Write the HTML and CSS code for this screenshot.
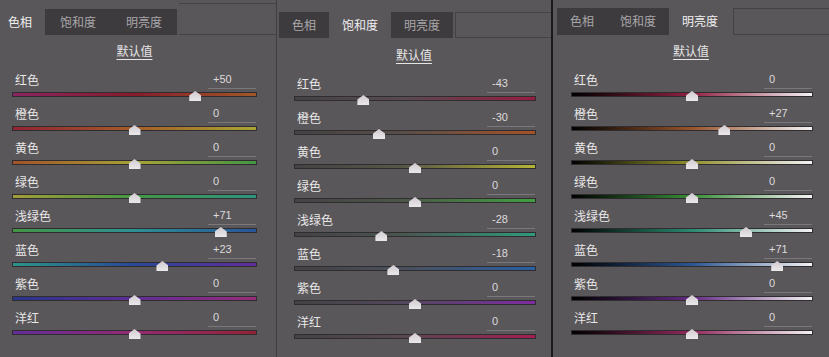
FILE: index.html
```html
<!DOCTYPE html>
<html lang="zh-CN">
<head>
    <meta charset="UTF-8">
    <meta name="viewport" content="width=device-width, initial-scale=1.0">
    <title>HSL 调整</title>
    <link rel="stylesheet" href="styles.css">
</head>
<body>
    <div class="board">
        <!-- 色相 -->
        <section class="panel panel-hue">
            <div class="tabs">
                <span class="tab active">色相</span>
                <span class="tab">饱和度</span>
                <span class="tab">明亮度</span>
                <span class="tab-fill"></span>
            </div>
            <div class="defaults"><span class="reset">默认值</span></div>
            <div class="rows">
                <div class="row">
                    <div class="row-head"><span class="name">红色</span><span class="val">+50</span></div>
                    <div class="track t-red"><span class="thumb" style="left: 75%"></span></div>
                </div>
                <div class="row">
                    <div class="row-head"><span class="name">橙色</span><span class="val">0</span></div>
                    <div class="track t-orange"><span class="thumb" style="left: 50%"></span></div>
                </div>
                <div class="row">
                    <div class="row-head"><span class="name">黄色</span><span class="val">0</span></div>
                    <div class="track t-yellow"><span class="thumb" style="left: 50%"></span></div>
                </div>
                <div class="row">
                    <div class="row-head"><span class="name">绿色</span><span class="val">0</span></div>
                    <div class="track t-green"><span class="thumb" style="left: 50%"></span></div>
                </div>
                <div class="row">
                    <div class="row-head"><span class="name">浅绿色</span><span class="val">+71</span></div>
                    <div class="track t-aqua"><span class="thumb" style="left: 85.5%"></span></div>
                </div>
                <div class="row">
                    <div class="row-head"><span class="name">蓝色</span><span class="val">+23</span></div>
                    <div class="track t-blue"><span class="thumb" style="left: 61.5%"></span></div>
                </div>
                <div class="row">
                    <div class="row-head"><span class="name">紫色</span><span class="val">0</span></div>
                    <div class="track t-purple"><span class="thumb" style="left: 50%"></span></div>
                </div>
                <div class="row">
                    <div class="row-head"><span class="name">洋红</span><span class="val">0</span></div>
                    <div class="track t-magenta"><span class="thumb" style="left: 50%"></span></div>
                </div>
            </div>
        </section>

        <!-- 饱和度 -->
        <section class="panel panel-sat">
            <div class="tabs">
                <span class="tab">色相</span>
                <span class="tab active">饱和度</span>
                <span class="tab">明亮度</span>
                <span class="tab-fill"></span>
            </div>
            <div class="defaults"><span class="reset">默认值</span></div>
            <div class="rows">
                <div class="row">
                    <div class="row-head"><span class="name">红色</span><span class="val">-43</span></div>
                    <div class="track t-red"><span class="thumb" style="left: 28.5%"></span></div>
                </div>
                <div class="row">
                    <div class="row-head"><span class="name">橙色</span><span class="val">-30</span></div>
                    <div class="track t-orange"><span class="thumb" style="left: 35%"></span></div>
                </div>
                <div class="row">
                    <div class="row-head"><span class="name">黄色</span><span class="val">0</span></div>
                    <div class="track t-yellow"><span class="thumb" style="left: 50%"></span></div>
                </div>
                <div class="row">
                    <div class="row-head"><span class="name">绿色</span><span class="val">0</span></div>
                    <div class="track t-green"><span class="thumb" style="left: 50%"></span></div>
                </div>
                <div class="row">
                    <div class="row-head"><span class="name">浅绿色</span><span class="val">-28</span></div>
                    <div class="track t-aqua"><span class="thumb" style="left: 36%"></span></div>
                </div>
                <div class="row">
                    <div class="row-head"><span class="name">蓝色</span><span class="val">-18</span></div>
                    <div class="track t-blue"><span class="thumb" style="left: 41%"></span></div>
                </div>
                <div class="row">
                    <div class="row-head"><span class="name">紫色</span><span class="val">0</span></div>
                    <div class="track t-purple"><span class="thumb" style="left: 50%"></span></div>
                </div>
                <div class="row">
                    <div class="row-head"><span class="name">洋红</span><span class="val">0</span></div>
                    <div class="track t-magenta"><span class="thumb" style="left: 50%"></span></div>
                </div>
            </div>
        </section>

        <!-- 明亮度 -->
        <section class="panel panel-lum">
            <div class="tabs">
                <span class="tab">色相</span>
                <span class="tab">饱和度</span>
                <span class="tab active">明亮度</span>
                <span class="tab-fill"></span>
            </div>
            <div class="defaults"><span class="reset">默认值</span></div>
            <div class="rows">
                <div class="row">
                    <div class="row-head"><span class="name">红色</span><span class="val">0</span></div>
                    <div class="track t-red"><span class="thumb" style="left: 50%"></span></div>
                </div>
                <div class="row">
                    <div class="row-head"><span class="name">橙色</span><span class="val">+27</span></div>
                    <div class="track t-orange"><span class="thumb" style="left: 63.5%"></span></div>
                </div>
                <div class="row">
                    <div class="row-head"><span class="name">黄色</span><span class="val">0</span></div>
                    <div class="track t-yellow"><span class="thumb" style="left: 50%"></span></div>
                </div>
                <div class="row">
                    <div class="row-head"><span class="name">绿色</span><span class="val">0</span></div>
                    <div class="track t-green"><span class="thumb" style="left: 50%"></span></div>
                </div>
                <div class="row">
                    <div class="row-head"><span class="name">浅绿色</span><span class="val">+45</span></div>
                    <div class="track t-aqua"><span class="thumb" style="left: 72.5%"></span></div>
                </div>
                <div class="row">
                    <div class="row-head"><span class="name">蓝色</span><span class="val">+71</span></div>
                    <div class="track t-blue"><span class="thumb" style="left: 85.5%"></span></div>
                </div>
                <div class="row">
                    <div class="row-head"><span class="name">紫色</span><span class="val">0</span></div>
                    <div class="track t-purple"><span class="thumb" style="left: 50%"></span></div>
                </div>
                <div class="row">
                    <div class="row-head"><span class="name">洋红</span><span class="val">0</span></div>
                    <div class="track t-magenta"><span class="thumb" style="left: 50%"></span></div>
                </div>
            </div>
        </section>
    </div>
</body>
</html>
```

FILE: styles.css
```css
body {
    margin: 0;
    padding: 0;
    background-color: #5a575a;
    font-family: "Noto Sans CJK SC", "Noto Sans", sans-serif;
    overflow: hidden;
}

.board {
    display: flex;
    width: 829px;
    height: 357px;
}

.panel {
    box-sizing: border-box;
    height: 357px;
    padding-top: 9px;
    background-color: #5a575a;
    overflow: hidden;
}

.panel-hue {
    width: 277px;
    border-right: 1px solid #403e41;
}

.panel-sat {
    width: 276px;
    padding-top: 12px;
    border-right: 2px solid #1b191b;
}

.panel-lum {
    width: 276px;
    padding-top: 8px;
}

/* tab strip */
.tabs {
    display: flex;
    height: 26px;
}

.panel-hue .tabs {
    margin-left: -5px;
}

.panel-sat .tabs {
    margin-left: 2px;
}

.panel-lum .tabs {
    height: 27px;
    margin-left: 4px;
}

.tab {
    padding: 0 13px;
    line-height: 26px;
    font-size: 12px;
    color: #a9a6a9;
    background-color: #3d3b3e;
    white-space: nowrap;
}

.panel-hue .tab {
    padding: 0 15px;
}

.panel-hue .tab.active {
    padding: 0 13px;
}

.tab.active {
    color: #f0eff0;
    background-color: #5a575a;
}

.tab-fill {
    flex: 1;
    box-sizing: border-box;
    border: 1px solid #444245;
    border-right: none;
    margin-left: 2px;
}

.panel-hue .tab-fill {
    margin-top: -6px;
    border-left: none;
}

/* default button */
.defaults {
    margin: 4px 0 9px;
    text-align: center;
    line-height: 20px;
}

.panel-hue .defaults {
    padding-right: 7px;
}

.panel-sat .defaults {
    margin-top: 5px;
}

.reset {
    font-size: 12px;
    color: #e6e5e6;
    text-decoration: underline;
    text-underline-offset: 3px;
}

/* slider rows */
.rows {
    padding: 0 17px 0 19px;
}

.panel-hue .rows {
    padding: 0 20px 0 13px;
}

.panel-sat .rows {
    padding: 0 16px 0 18px;
}

.row {
    height: 34px;
}

.row-head {
    display: flex;
    justify-content: space-between;
    height: 19px;
}

.name {
    padding: 1px 0 0 2px;
    font-size: 12px;
    line-height: 17px;
    color: #e8e7e8;
}

.val {
    box-sizing: border-box;
    width: 48px;
    padding-left: 5px;
    font-family: "Liberation Sans", Arial, sans-serif;
    font-size: 11px;
    line-height: 18px;
    color: #dcdadc;
    border-bottom: 1px solid #7b787b;
}

.track {
    position: relative;
    height: 3px;
    margin-top: 4px;
    box-shadow: 0 0 0 1px #2f2d30;
}

.thumb {
    position: absolute;
    top: -2px;
    width: 12px;
    height: 10px;
    transform: translateX(-50%);
    background: linear-gradient(#cfcacf, #ebe8eb);
    clip-path: polygon(50% 0, 100% 45%, 100% 100%, 0 100%, 0 45%);
}

/* hue gradients */
.panel-hue .t-red { background: linear-gradient(90deg, #8a2460, #861c2a 50%, #a05828); }
.panel-hue .t-orange { background: linear-gradient(90deg, #902434, #a65c28 50%, #aaa636); }
.panel-hue .t-yellow { background: linear-gradient(90deg, #a25228, #a6a236 50%, #449644); }
.panel-hue .t-green { background: linear-gradient(90deg, #a29e38, #449644 50%, #2e9480); }
.panel-hue .t-aqua { background: linear-gradient(90deg, #429442, #2c9094 50%, #2a5498); }
.panel-hue .t-blue { background: linear-gradient(90deg, #2c9488, #284896 50%, #602c98); }
.panel-hue .t-purple { background: linear-gradient(90deg, #28368a, #602c96 50%, #982c7a); }
.panel-hue .t-magenta { background: linear-gradient(90deg, #622c98, #942a72 50%, #942236); }

/* saturation gradients */
.panel-sat .t-red { background: linear-gradient(90deg, #444244, #584a50 45%, #981c40); }
.panel-sat .t-orange { background: linear-gradient(90deg, #444244, #584e48 45%, #a45228); }
.panel-sat .t-yellow { background: linear-gradient(90deg, #444244, #585646 45%, #b4b436); }
.panel-sat .t-green { background: linear-gradient(90deg, #444244, #4c5648 45%, #40a040); }
.panel-sat .t-aqua { background: linear-gradient(90deg, #444244, #4a5650 45%, #2e9a7c); }
.panel-sat .t-blue { background: linear-gradient(90deg, #444244, #4a505c 45%, #285ea2); }
.panel-sat .t-purple { background: linear-gradient(90deg, #444244, #52485c 45%, #7e2ca2); }
.panel-sat .t-magenta { background: linear-gradient(90deg, #444244, #584852 45%, #a21e52); }

/* lightness gradients */
.panel-lum .t-red { background: linear-gradient(90deg, #000, #902242 50%, #f4f2f4); }
.panel-lum .t-orange { background: linear-gradient(90deg, #000, #98542a 50%, #f4f2f4); }
.panel-lum .t-yellow { background: linear-gradient(90deg, #000, #90902e 50%, #f4f2f4); }
.panel-lum .t-green { background: linear-gradient(90deg, #000, #388e38 50%, #f4f2f4); }
.panel-lum .t-aqua { background: linear-gradient(90deg, #000, #2a8a70 50%, #f4f2f4); }
.panel-lum .t-blue { background: linear-gradient(90deg, #000, #2a5692 50%, #f4f2f4); }
.panel-lum .t-purple { background: linear-gradient(90deg, #000, #642a84 50%, #f4f2f4); }
.panel-lum .t-magenta { background: linear-gradient(90deg, #000, #922a5e 50%, #f4f2f4); }
```
